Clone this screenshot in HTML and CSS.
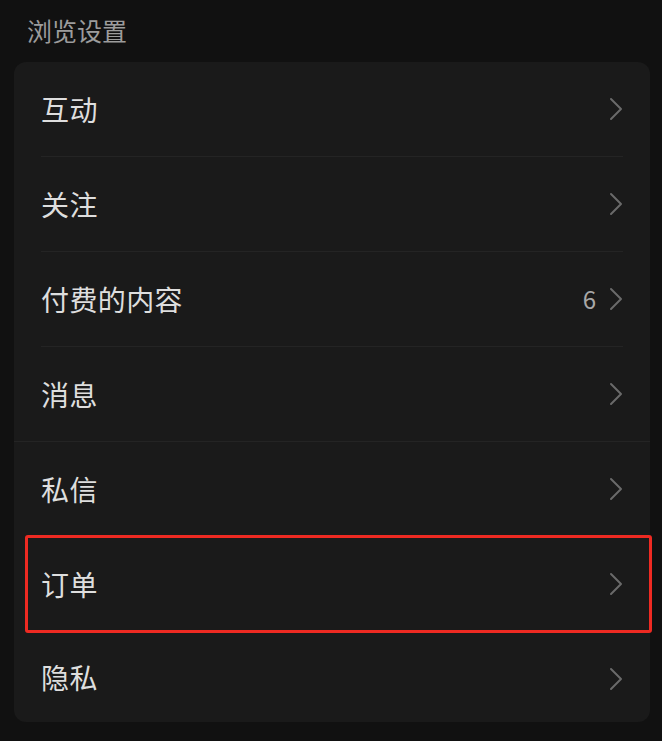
FILE: index.html
```html
<!DOCTYPE html>
<html lang="zh-CN">
<head>
<meta charset="utf-8">
<title>浏览设置</title>
<link rel="stylesheet" href="styles.css">
</head>
<body>
<div class="page">
  <div class="section-title">浏览设置</div>
  <div class="card">
    <div class="row"><span class="label">互动</span><span class="right"><svg class="chev" viewBox="0 0 14 24"><path d="M2 2 L12 12 L2 22"/></svg></span></div>
    <div class="row"><span class="label">关注</span><span class="right"><svg class="chev" viewBox="0 0 14 24"><path d="M2 2 L12 12 L2 22"/></svg></span></div>
    <div class="row"><span class="label">付费的内容</span><span class="right"><span class="count">6</span><svg class="chev" viewBox="0 0 14 24"><path d="M2 2 L12 12 L2 22"/></svg></span></div>
    <div class="row full"><span class="label">消息</span><span class="right"><svg class="chev" viewBox="0 0 14 24"><path d="M2 2 L12 12 L2 22"/></svg></span></div>
    <div class="row nodiv"><span class="label">私信</span><span class="right"><svg class="chev" viewBox="0 0 14 24"><path d="M2 2 L12 12 L2 22"/></svg></span></div>
    <div class="row nodiv highlighted"><span class="label">订单</span><span class="right"><svg class="chev" viewBox="0 0 14 24"><path d="M2 2 L12 12 L2 22"/></svg></span><span class="mark"></span></div>
    <div class="row last"><span class="label">隐私</span><span class="right"><svg class="chev" viewBox="0 0 14 24"><path d="M2 2 L12 12 L2 22"/></svg></span></div>
  </div>
</div>
</body>
</html>
```

FILE: styles.css
```css
* { box-sizing: border-box; }
html, body {
  margin: 0;
  padding: 0;
  background: #111111;
}
body {
  font-family: "Noto Sans CJK SC", "Noto Sans", sans-serif;
  width: 662px;
  height: 741px;
  overflow: hidden;
}
.page {
  display: flex;
  flex-direction: column;
}
.section-title {
  height: 62px;
  padding-left: 27px;
  padding-top: 12px;
  font-size: 25px;
  line-height: 36px;
  color: #9c9c9c;
}
.card {
  margin: 0 12px 0 14px;
  background: #1a1a1a;
  border-radius: 12px;
  display: flex;
  flex-direction: column;
}
.row {
  position: relative;
  height: 95px;
  display: flex;
  align-items: center;
  justify-content: space-between;
  padding: 0 27px 2px 27px;
}
.row::after {
  content: "";
  position: absolute;
  left: 27px;
  right: 27px;
  bottom: 0;
  height: 1px;
  background: #242424;
}
.row.full::after {
  left: 0;
  right: 0;
}
.row.nodiv::after,
.row.last::after {
  display: none;
}
.row.last {
  height: 90px;
  padding-bottom: 0;
}
.row.last .right {
  margin-top: 4px;
}
.label {
  font-size: 28px;
  color: #dedede;
  letter-spacing: 0.4px;
}
.right {
  display: flex;
  align-items: center;
  gap: 13px;
}
.count {
  font-size: 24px;
  color: #a8a8a8;
}
.chev {
  width: 14px;
  height: 24px;
  fill: none;
  stroke: #6a6a6a;
  stroke-width: 2;
  stroke-linecap: round;
  stroke-linejoin: round;
}
.mark {
  position: absolute;
  top: -2px;
  bottom: -1px;
  left: 11px;
  right: -2px;
  border: 3px solid #ee2a22;
  border-radius: 3px;
  pointer-events: none;
}
```
